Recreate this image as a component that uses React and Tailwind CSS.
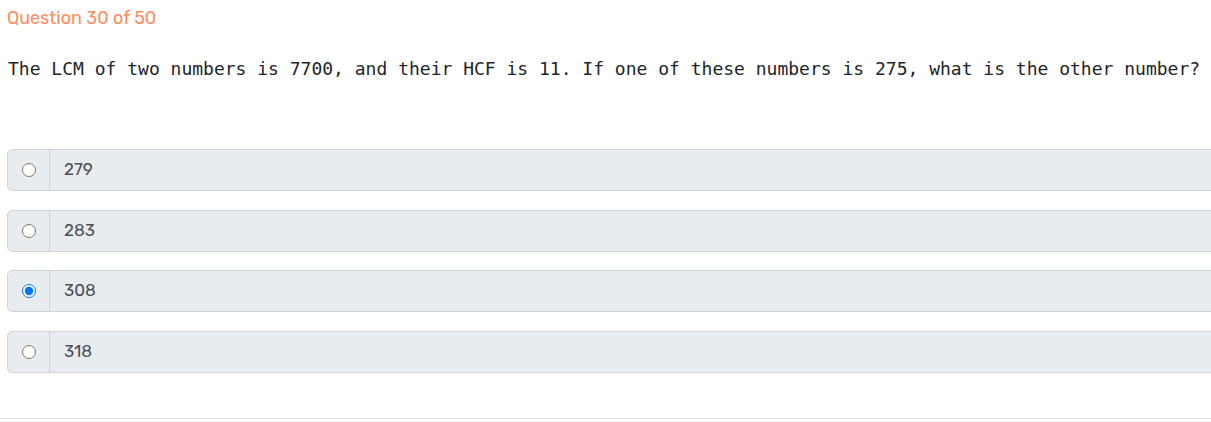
const options = ["279", "283", "308", "318"];
const gaps = ["mt-0", "mt-[19px]", "mt-[18px]", "mt-[19px]"];

export default function App() {
  return (
    <div className="w-[1211px] h-[422px] overflow-hidden bg-white">
      <div className="pl-[7px]">
        <div className="pt-[7px] text-[18px] leading-[22px] text-[#fd8c5f] font-['Rubik','Open_Sans',sans-serif]">
          Question 30 of 50
        </div>
        <p className="mt-[29px] pl-[1px] text-[18px] leading-[22px] text-[#212529] whitespace-nowrap font-['DejaVu_Sans_Mono',monospace]">
          The LCM of two numbers is 7700, and their HCF is 11. If one of these numbers is 275, what is the other number?
        </p>
        <div className="mt-[69px] flex flex-col">
          {options.map((opt, i) => (
            <label
              key={opt}
              className={`flex h-[42px] w-[1220px] border border-[#ced4da] rounded-l-[5px] bg-[#e9ecef] ${gaps[i]}`}
            >
              <div className="w-[42px] flex items-center justify-center border-r border-[#ced4da]">
                <input
                  type="radio"
                  name="answer"
                  defaultChecked={i === 2}
                  className="m-0 ml-[1px] w-[14px] h-[14px]"
                />
              </div>
              <div className="flex items-center pl-[14px] text-[17px] text-[#495057] font-['Rubik','Open_Sans',sans-serif]">
                {opt}
              </div>
            </label>
          ))}
        </div>
      </div>
      <div className="mt-[45px] border-t border-[#dee2e6]" />
    </div>
  );
}
